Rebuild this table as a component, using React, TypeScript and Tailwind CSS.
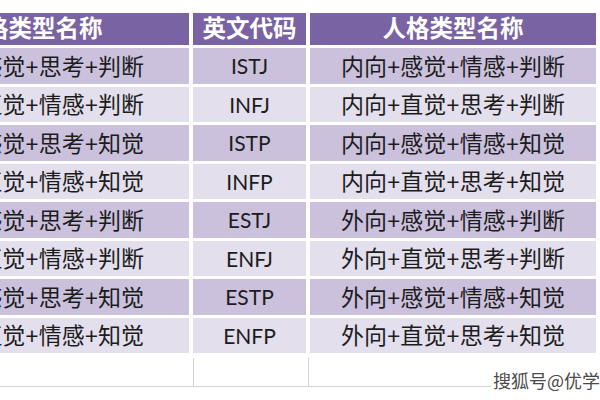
import React from "react";

const rows = [
  { left: "内向+感觉+思考+判断", code: "ISTJ", name: "内向+感觉+情感+判断" },
  { left: "内向+直觉+情感+判断", code: "INFJ", name: "内向+直觉+思考+判断" },
  { left: "内向+感觉+思考+知觉", code: "ISTP", name: "内向+感觉+情感+知觉" },
  { left: "内向+直觉+情感+知觉", code: "INFP", name: "内向+直觉+思考+知觉" },
  { left: "外向+感觉+思考+判断", code: "ESTJ", name: "外向+感觉+情感+判断" },
  { left: "外向+直觉+情感+判断", code: "ENFJ", name: "外向+直觉+思考+判断" },
  { left: "外向+感觉+思考+知觉", code: "ESTP", name: "外向+感觉+情感+知觉" },
  { left: "外向+直觉+情感+知觉", code: "ENFP", name: "外向+直觉+思考+知觉" },
];

const font = "font-['Lato','Noto_Sans_CJK_SC',sans-serif]";

export default function App() {
  return (
    <div className={`relative h-[400px] w-[600px] overflow-hidden bg-white ${font}`}>
      <div className="ml-[-125px] grid w-[721px] grid-cols-[314px_113px_286px] gap-x-[4px] gap-y-[3px] pt-[13px]">
        {["人格类型名称", "英文代码", "人格类型名称"].map((h, i) => (
          <div
            key={i}
            className="flex h-[32px] items-center justify-center whitespace-nowrap bg-[#7a63a3] text-[23.5px] font-bold text-white"
          >
            {h}
          </div>
        ))}
        {rows.map((r, i) => {
          const bg = i % 2 === 0 ? "bg-[#cbc1dc]" : "bg-[#e3dfec]";
          return (
            <React.Fragment key={r.code}>
              <div className={`flex h-[35.5px] items-center justify-center whitespace-nowrap text-[23px] text-[#1c1c1c] ${bg}`}>
                {r.left}
              </div>
              <div className={`flex h-[35.5px] items-center justify-center whitespace-nowrap text-[21px] text-[#1c1c1c] ${bg}`}>
                {r.code}
              </div>
              <div className={`flex h-[35.5px] items-center justify-center whitespace-nowrap text-[23px] text-[#1c1c1c] ${bg}`}>
                {r.name}
              </div>
            </React.Fragment>
          );
        })}
      </div>
      <div className="mt-[5px] grid h-[29px] grid-cols-[193px_115px_292px] border-b border-[#d4d4d4]">
        <div />
        <div className="border-l border-[#d4d4d4]" />
        <div className="border-l border-[#d4d4d4]" />
      </div>
      <div className="absolute left-[491px] top-[369px] whitespace-nowrap bg-white pl-[2px] font-['Noto_Sans_CJK_SC',sans-serif] text-[18px] leading-[22px] text-[#4a4a4a] [text-shadow:0_0_2px_#fff,1px_1px_0_#fff]">
        搜狐号@优学
      </div>
    </div>
  );
}
